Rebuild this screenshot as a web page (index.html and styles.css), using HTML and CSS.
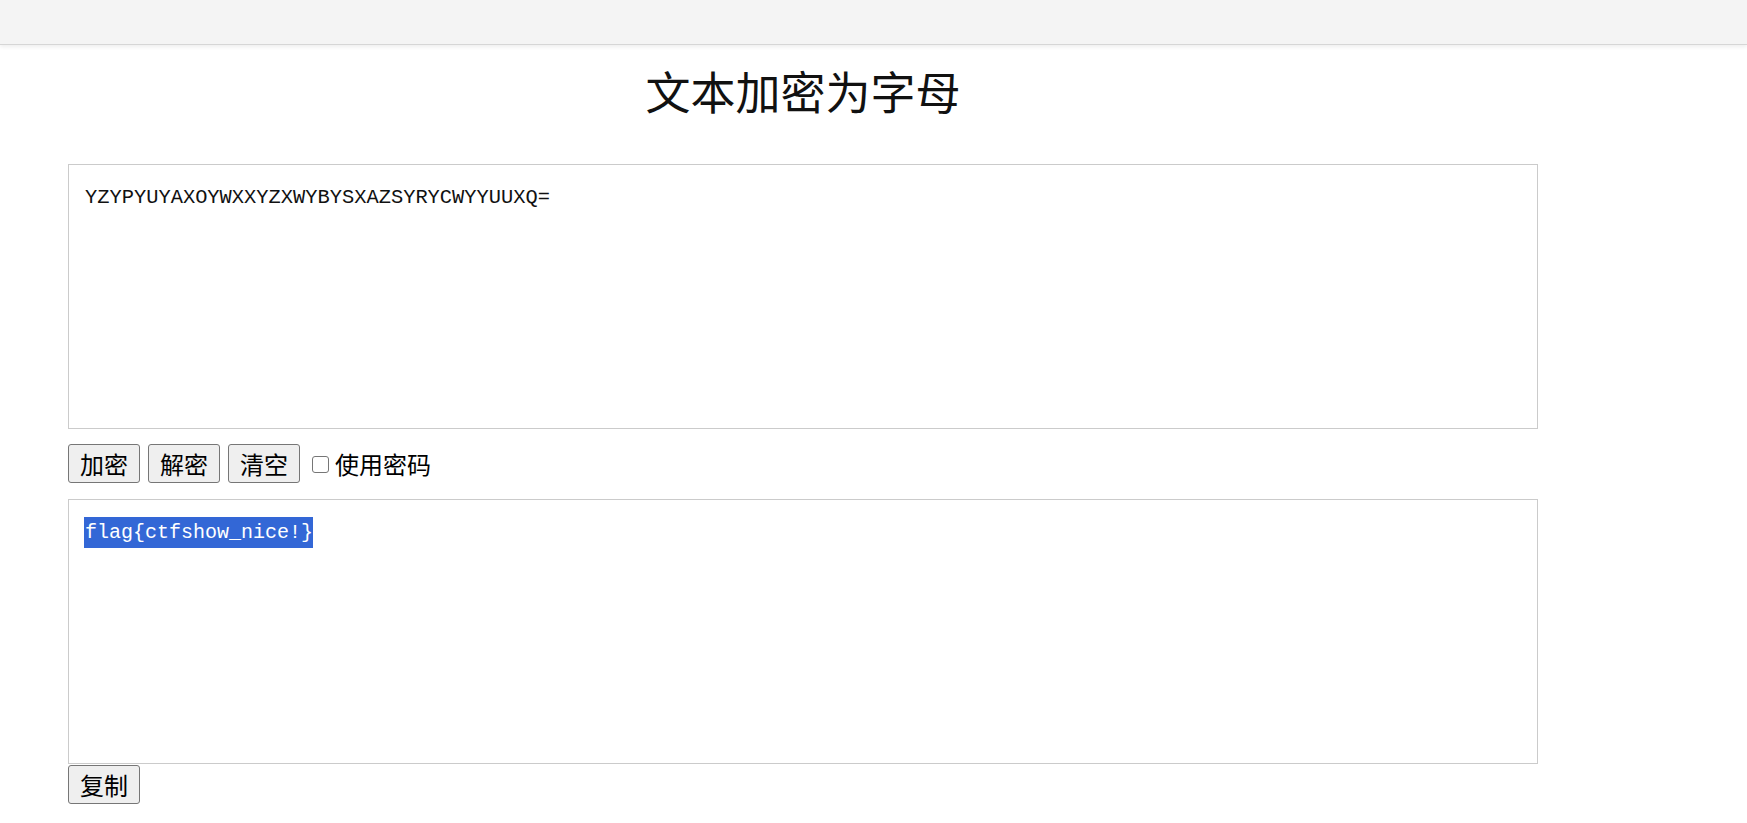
FILE: index.html
```html
<!DOCTYPE html>
<html lang="zh-CN">
<head>
<meta charset="utf-8">
<title>文本加密为字母</title>
<link rel="stylesheet" href="styles.css">
</head>
<body>
<div class="topbar"></div>
<main class="main">
  <h1 class="title">文本加密为字母</h1>
  <div class="box box-input">YZYPYUYAXOYWXXYZXWYBYSXAZSYRYCWYYUUXQ=</div>
  <div class="controls">
    <button class="btn">加密</button>
    <button class="btn">解密</button>
    <button class="btn">清空</button>
    <label class="check"><span class="checkbox"></span>使用密码</label>
  </div>
  <div class="box box-output"><span class="sel">flag{ctfshow_nice!}</span></div>
  <div class="copy-row">
    <button class="btn">复制</button>
  </div>
</main>
</body>
</html>
```

FILE: styles.css
```css
html, body {
  margin: 0;
  padding: 0;
  background: #fff;
}

body {
  font-family: "Noto Sans CJK SC", "Noto Sans", sans-serif;
  color: #000;
}

.topbar {
  height: 44px;
  background: #f4f4f4;
  border-bottom: 1px solid #d6d6d6;
  box-shadow: 0 2px 4px rgba(0, 0, 0, 0.07);
}

.main {
  width: 1470px;
  margin-left: 68px;
}

.title {
  margin: 16px 0 43px;
  font-size: 45px;
  line-height: 60px;
  font-weight: normal;
  text-align: center;
  color: #111;
}

.box {
  box-sizing: border-box;
  height: 265px;
  border: 1px solid #cbcbcb;
  padding: 16px;
  font-family: "Liberation Mono", monospace;
  font-size: 20.4px;
  line-height: 33px;
  color: #111;
  background: #fff;
}

.box-output {
  font-size: 20px;
}

.controls {
  display: flex;
  align-items: center;
  gap: 8px;
  margin: 15px 0 16px;
}

.btn {
  box-sizing: border-box;
  height: 39px;
  padding: 0 11px;
  font-family: "Noto Sans CJK SC", sans-serif;
  font-size: 24px;
  line-height: 1;
  color: #000;
  background: #efefef;
  border: 1px solid #767676;
  border-radius: 3px;
}

.check {
  display: flex;
  align-items: center;
  gap: 6px;
  margin-left: 4px;
  font-size: 24px;
}

.checkbox {
  box-sizing: border-box;
  width: 17px;
  height: 17px;
  border: 1px solid #767676;
  border-radius: 3px;
  background: #fff;
  margin-top: 1px;
}

.sel {
  background: #3367d6;
  color: #fff;
  padding: 4px 0;
  margin-left: -1px;
  padding-left: 1px;
}

.copy-row {
  display: flex;
  margin-top: 1px;
}
```
